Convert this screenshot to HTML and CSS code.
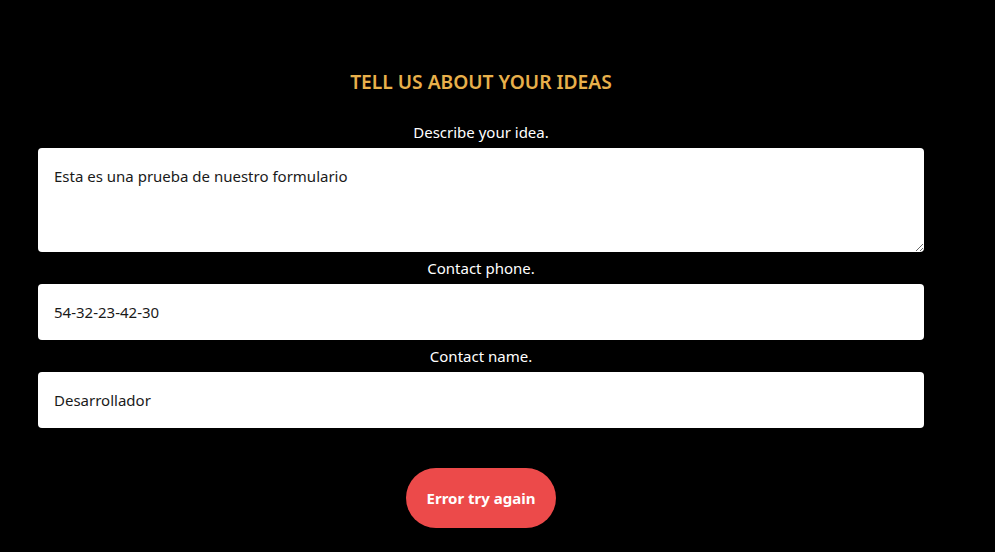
FILE: index.html
```html
<!DOCTYPE html>
<html>
<head>
<meta charset="utf-8">
<link rel="stylesheet" href="styles.css">
</head>
<body>
<main class="page">
  <form class="form">
    <h2 class="title">TELL US ABOUT YOUR IDEAS</h2>
    <label class="label" for="idea">Describe your idea.</label>
    <textarea class="field area" id="idea">Esta es una prueba de nuestro formulario</textarea>
    <label class="label" for="phone">Contact phone.</label>
    <input class="field" id="phone" type="text" value="54-32-23-42-30">
    <label class="label" for="name">Contact name.</label>
    <input class="field" id="name" type="text" value="Desarrollador">
    <button class="btn" type="button">Error try again</button>
  </form>
</main>
</body>
</html>
```
FILE: styles.css
```css
html, body {
  margin: 0;
  padding: 0;
  background: #000;
  height: 100%;
}
body {
  font-family: "Noto Sans", "Open Sans", sans-serif;
  color: #fff;
}
.page {
  padding: 0 71px 0 38px;
}
.form {
  display: flex;
  flex-direction: column;
  align-items: center;
}
.title {
  margin: 70px 0 22px;
  font-size: 19.2px;
  font-weight: 600;
  line-height: 24px;
  color: #e8b04b;
}
.label {
  font-size: 15px;
  line-height: 32px;
  color: #fff;
}
.field {
  box-sizing: border-box;
  width: 100%;
  height: 56px;
  margin: 0;
  border: none;
  border-radius: 4px;
  background: #fff;
  padding: 0 16px;
  font-family: inherit;
  font-size: 15px;
  color: #1a1a1a;
  outline: none;
}
.area {
  height: 104px;
  padding: 18px 16px;
  resize: vertical;
  display: block;
}
.btn {
  margin-top: 40px;
  width: 150px;
  height: 60px;
  border: none;
  border-radius: 30px;
  background: #ec4a4a;
  color: #fff;
  font-family: inherit;
  font-weight: 700;
  font-size: 15px;
}
```
